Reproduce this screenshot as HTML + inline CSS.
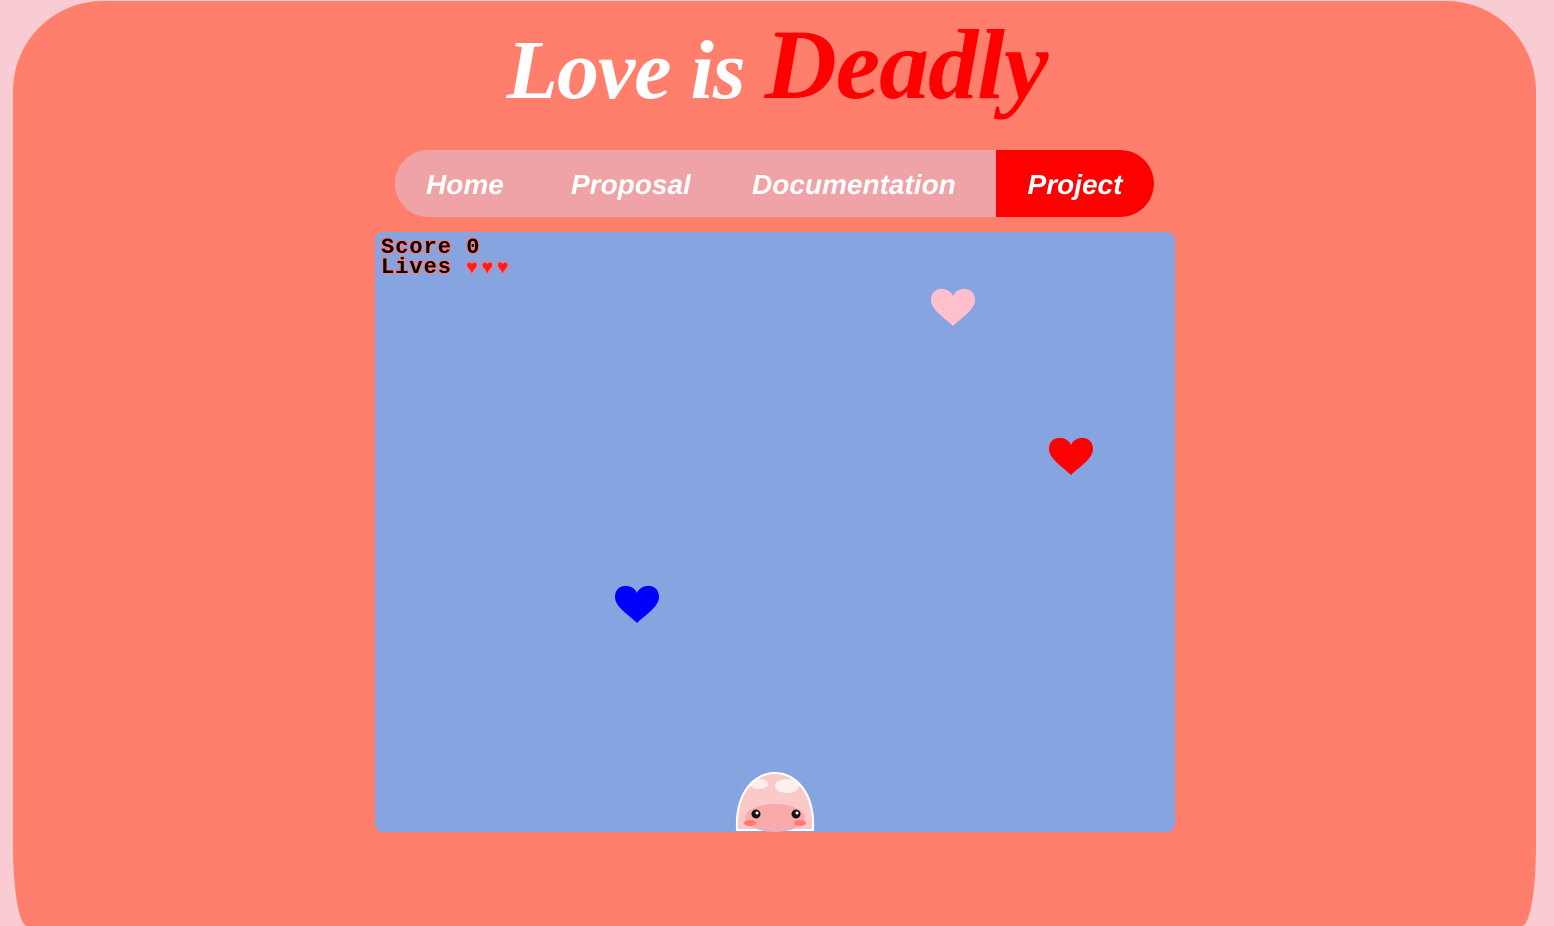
<!DOCTYPE html>
<html><head><meta charset="utf-8"><style>
html,body{margin:0;padding:0;width:1554px;height:926px;overflow:hidden;background:#f9cbd3;font-family:"Liberation Sans",sans-serif}
.main{position:absolute;left:13px;top:1px;width:1523px;height:925px;background:#ff7f6c;border-radius:90px 90px 14px 14px / 90px 90px 80px 80px}
.title{position:absolute;left:0;width:1554px;top:10px;text-align:center;font-family:"Liberation Serif",serif;font-style:italic;font-weight:bold;font-size:84px;line-height:110px;color:#fff;letter-spacing:-1px}
.title span{color:#f00;font-size:100px}
.nav{position:absolute;left:395px;top:150px;width:759px;height:67px;background:#efa3a6;border-radius:34px;overflow:hidden}
.nav a{position:absolute;top:0;height:67px;line-height:69px;color:#fff;font-weight:bold;font-style:italic;font-size:28px;text-decoration:none}
.nav .act{left:601px;width:158px;background:#f00;border-radius:0 34px 34px 0;text-align:center}
.game{position:absolute;left:375px;top:232px;width:800px;height:600px;background:#86a4df;border-radius:8px;overflow:hidden}
.hud{position:absolute;left:6px;top:6px;font-family:"Liberation Mono",monospace;font-weight:bold;font-size:22px;line-height:20px;letter-spacing:1px;color:#000;text-shadow:1px 1px 0 #f77,-1px -1px 0 #f77,1px -1px 0 #f77,-1px 1px 0 #f77}
.hud b{color:#e22;font-size:19px;letter-spacing:4px}
</style></head><body>
<div class="main"></div>
<div class="title">Love is <span>Deadly</span></div>
<div class="nav">
<a style="left:31px">Home</a><a style="left:176px">Proposal</a><a style="left:357px">Documentation</a><a class="act">Project</a>
</div>
<div class="game">
<div class="hud">Score 0<br>Lives <b>♥♥♥</b></div>
<svg width="800" height="600" style="position:absolute;left:0;top:0">
<defs><path id="h" d="M0 8 C-4 -2 -22 -2 -22 12 C-22 22 -8 30 0 38 C8 30 22 22 22 12 C22 -2 4 -2 0 8Z"/></defs>
<use href="#h" x="578" y="56" fill="#ffc0cb"/>
<use href="#h" x="696" y="205" fill="#f00"/>
<use href="#h" x="262" y="353" fill="#00f"/>
<g transform="translate(400,600)">
<path d="M-38 -2 C-40 -40 -20 -59 0 -59 C20 -59 40 -40 38 -2Z" fill="#fcc9c9" stroke="#fff" stroke-width="2"/>
<ellipse cx="0" cy="-14" rx="30" ry="14" fill="#f9aaaa"/>
<ellipse cx="-16" cy="-48" rx="9" ry="5" fill="#fff" opacity=".7"/>
<ellipse cx="12" cy="-46" rx="12" ry="7" fill="#fff" opacity=".7"/>
<circle cx="-19" cy="-18" r="4.5" fill="#111"/><circle cx="21" cy="-18" r="4.5" fill="#111"/>
<circle cx="-18" cy="-19" r="1.5" fill="#fff"/><circle cx="22" cy="-19" r="1.5" fill="#fff"/>
<ellipse cx="-25" cy="-9" rx="6" ry="3" fill="#f77"/><ellipse cx="25" cy="-9" rx="6" ry="3" fill="#f77"/>
</g>
</svg>
</div>
</body></html>
